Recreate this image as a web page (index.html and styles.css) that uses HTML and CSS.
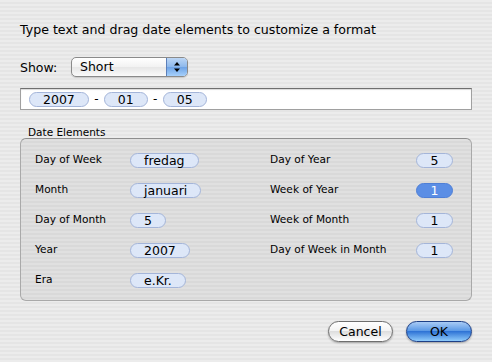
FILE: index.html
```
<!DOCTYPE html>
<html>
<head>
	<meta charset="utf-8">
	<title>Customize Date Format</title>
	<link rel="stylesheet" href="styles.css">
</head>
<body>

<div class='sheet'>
	<p class='prompt'>Type text and drag date elements to customize a format</p>

	<div class='show'>
		<label>Show:</label>
		<div class='popup'>
			<span class='popup-text'>Short</span>
			<span class='stepper'>
				<svg width='8' height='12' viewBox='0 0 8 12'>
					<path d='M4 1 L7 4.5 L1 4.5 Z' fill='#000'/>
					<path d='M4 11 L7 7.5 L1 7.5 Z' fill='#000'/>
				</svg>
			</span>
		</div>
	</div>

	<div class='format-field'>
		<span class='token'>2007</span>
		<span class='sep'>-</span>
		<span class='token'>01</span>
		<span class='sep'>-</span>
		<span class='token'>05</span>
	</div>

	<div class='group-title'>Date Elements</div>
	<div class='group'>
		<span class='label'>Day of Week</span>
		<span><span class='token'>fredag</span></span>
		<span class='label'>Day of Year</span>
		<span><span class='token small'>5</span></span>

		<span class='label'>Month</span>
		<span><span class='token'>januari</span></span>
		<span class='label'>Week of Year</span>
		<span><span class='token small selected'>1</span></span>

		<span class='label'>Day of Month</span>
		<span><span class='token'>5</span></span>
		<span class='label'>Week of Month</span>
		<span><span class='token small'>1</span></span>

		<span class='label'>Year</span>
		<span><span class='token'>2007</span></span>
		<span class='label'>Day of Week in Month</span>
		<span><span class='token small'>1</span></span>

		<span class='label'>Era</span>
		<span><span class='token'>e.Kr.</span></span>
		<span></span>
		<span></span>
	</div>

	<div class='buttons'>
		<button class='btn cancel'>Cancel</button>
		<button class='btn ok'>OK</button>
	</div>
</div>

</body>
</html>
```

FILE: styles.css
```
html, body {
	margin: 0;
	padding: 0;
}

body {
	width: 492px;
	height: 362px;
	overflow: hidden;
	font-family: 'DejaVu Sans', sans-serif;
	color: #000;
	background: repeating-linear-gradient(to bottom, #ececec 0, #ececec 2px, #e5e5e5 2px, #e5e5e5 4px);
}

.sheet {
	padding: 0 20px;
}

.prompt {
	margin: 0;
	padding-top: 22px;
	font-size: 12.6px;
	line-height: 16px;
}

.show {
	display: flex;
	align-items: center;
	margin-top: 19px;
	height: 20px;
	font-size: 12.5px;
}

.show label {
	width: 51px;
}

.popup {
	display: flex;
	width: 115px;
	height: 18px;
	border: 1px solid #8a8a8a;
	border-radius: 5px;
	overflow: hidden;
	background: linear-gradient(#ffffff, #f2f2f2 50%, #e6e6e6 51%, #fafafa);
	box-shadow: 0 1px 1px rgba(0,0,0,0.15);
}

.popup-text {
	flex: 1;
	padding-left: 8px;
	line-height: 18px;
}

.stepper {
	width: 20px;
	display: flex;
	align-items: center;
	justify-content: center;
	border-left: 1px solid #5b7fb9;
	background: linear-gradient(#bcd6f5, #8db8ec 50%, #6ea3e6 51%, #a6d0fb);
}

.format-field {
	display: flex;
	align-items: center;
	margin-top: 11px;
	height: 20px;
	padding-left: 8px;
	background: #fff;
	border: 1px solid #a0a0a0;
	border-top-color: #6f6f6f;
	box-shadow: inset 0 1px 1px rgba(0,0,0,0.15);
}

.sep {
	width: 15px;
	text-align: center;
	font-size: 12px;
}

.token {
	display: inline-block;
	height: 13px;
	line-height: 13px;
	padding: 0 13px;
	border: 1px solid #a4b5d9;
	border-radius: 8px;
	background: #dde7f8;
	font-size: 12.5px;
	text-align: center;
}

.token.small {
	width: 9px;
}

.token.selected {
	background: #5b8ee5;
	border-color: #4f7fd6;
	color: #fff;
}

.group-title {
	margin: 16px 0 0 8px;
	font-size: 10.5px;
	line-height: 12px;
}

.group {
	display: grid;
	grid-template-columns: 95px 140px 146px auto;
	grid-auto-rows: 30px;
	align-items: center;
	height: 150px;
	padding: 5px 0 6px 14px;
	border: 1px solid #a9a9a9;
	border-top-color: #8e8e8e;
	border-radius: 6px;
	background: repeating-linear-gradient(to bottom, #e0e0e0 0, #e0e0e0 2px, #d9d9d9 2px, #d9d9d9 4px);
}

.label {
	font-size: 10.6px;
}

.buttons {
	display: flex;
	justify-content: flex-end;
	gap: 13px;
	margin-top: 20px;
}

.btn {
	height: 21px;
	padding: 0;
	border-radius: 11px;
	font-family: 'DejaVu Sans', sans-serif;
	font-size: 12.5px;
	color: #000;
	box-shadow: 0 1px 2px rgba(0,0,0,0.3);
}

.cancel {
	width: 65px;
	border: 1px solid #6e6e6e;
	background: linear-gradient(#ffffff, #f4f4f4 45%, #dedede 50%, #ffffff);
}

.ok {
	width: 66px;
	border: 1px solid #1d3f86;
	background: linear-gradient(#a9cbf5, #5d9ae6 45%, #2f74d6 50%, #8fcbfb);
}
```
